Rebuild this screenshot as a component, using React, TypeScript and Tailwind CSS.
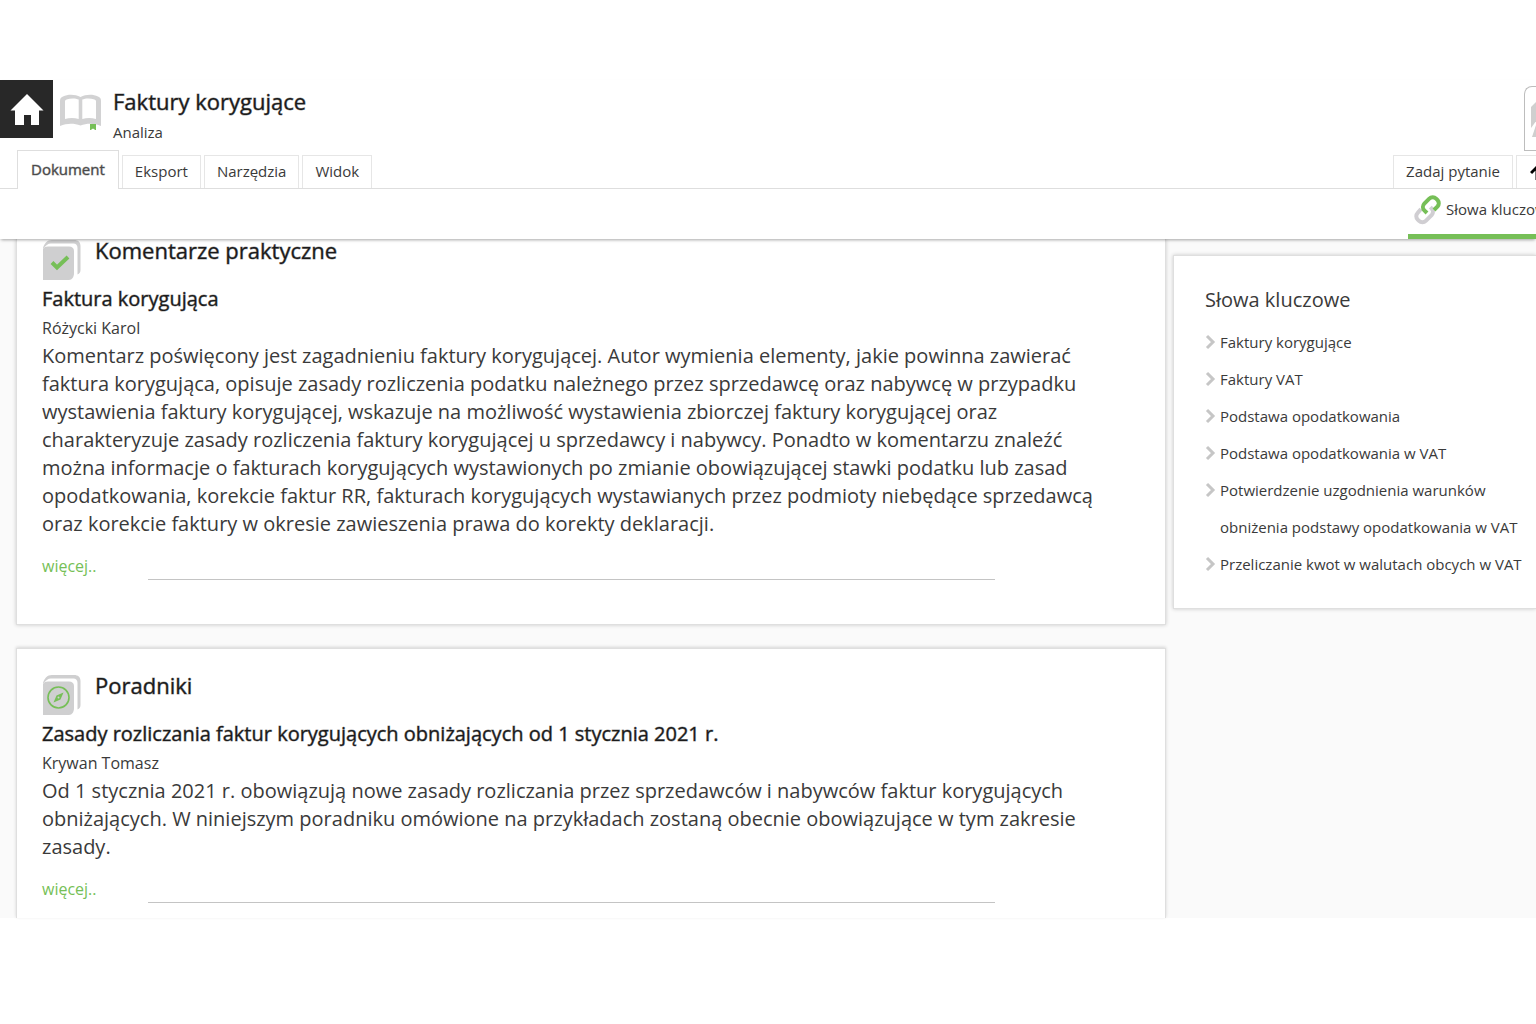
import type { ReactNode } from 'react'

interface Entry {
  title: string
  author: string
  text: string
}

const tabs = ['Eksport', 'Narzędzia', 'Widok']

const keywords = [
  'Faktury korygujące',
  'Faktury VAT',
  'Podstawa opodatkowania',
  'Podstawa opodatkowania w VAT',
  'Potwierdzenie uzgodnienia warunków obniżenia podstawy opodatkowania w VAT',
  'Przeliczanie kwot w walutach obcych w VAT',
]

const comment: Entry = {
  title: 'Faktura korygująca',
  author: 'Różycki Karol',
  text: 'Komentarz poświęcony jest zagadnieniu faktury korygującej. Autor wymienia elementy, jakie powinna zawierać faktura korygująca, opisuje zasady rozliczenia podatku należnego przez sprzedawcę oraz nabywcę w przypadku wystawienia faktury korygującej, wskazuje na możliwość wystawienia zbiorczej faktury korygującej oraz charakteryzuje zasady rozliczenia faktury korygującej u sprzedawcy i nabywcy. Ponadto w komentarzu znaleźć można informacje o fakturach korygujących wystawionych po zmianie obowiązującej stawki podatku lub zasad opodatkowania, korekcie faktur RR, fakturach korygujących wystawianych przez podmioty niebędące sprzedawcą oraz korekcie faktury w okresie zawieszenia prawa do korekty deklaracji.',
}

const guide: Entry = {
  title: 'Zasady rozliczania faktur korygujących obniżających od 1 stycznia 2021 r.',
  author: 'Krywan Tomasz',
  text: 'Od 1 stycznia 2021 r. obowiązują nowe zasady rozliczania przez sprzedawców i nabywców faktur korygujących obniżających. W niniejszym poradniku omówione na przykładach zostaną obecnie obowiązujące w tym zakresie zasady.',
}

function HomeIcon() {
  return (
    <svg className="w-[34px] h-8" viewBox="0 -1 34 32" fill="#fff" aria-hidden="true">
      <path d="M17 0 33.500 16.500H29V31h-8V21h-7v10H5V16.500H.5Z" />
    </svg>
  )
}

function OpenBookIcon() {
  return (
    <svg className="w-[42px] h-9" viewBox="0 0 42 36" fill="none" aria-hidden="true">
      <path
        d="M0 7C0 4 1 3.500 3 2.500 8 .2 15 .2 20.500 3 26 .2 33 .2 38 2.500c2 1 3 1.500 3 4.500v25c-7-3-14-3-20.500-.5C14 29 7 29 0 32Z"
        fill="#d2d2d3"
      />
      <path d="M5 7.500c0-1 .5-1.500 1.500-2 4-1.500 9-1.500 12.200 0v19.500c-4.400-1.200-9.200-1.200-13.700 0Z" fill="#fff" />
      <path d="M36 7.500c0-1-.5-1.500-1.500-2-4-1.500-9-1.500-12.200 0v19.500c4.400-1.200 9.200-1.200 13.700 0Z" fill="#fff" />
      <path d="M30 30h6v6.500l-3-2-3 2Z" fill="#76bf57" />
    </svg>
  )
}

function LinkIcon() {
  return (
    <svg className="w-7 h-8" viewBox="0 0 28 32" fill="none" strokeWidth="4" aria-hidden="true">
      <path d="m7 15-3.300 3.800a4.800 4.800 0 0 0 0 6.800l1.300 1.300a4.800 4.800 0 0 0 6.800 0l6-6a4.800 4.800 0 0 0 0-6.300l-1.500-1.500" stroke="#d0ced2" />
      <path d="m13 19-2.700-2.700a4.800 4.800 0 0 1 0-6.700l5-5a4.800 4.800 0 0 1 6.800 0l1.500 1.500a4.800 4.800 0 0 1 0 6.300L20 16" stroke="#76bf57" />
    </svg>
  )
}

function BookStack({ children }: { children: ReactNode }) {
  return (
    <svg className="w-10 h-[42px] shrink-0" viewBox="-1 -1 40 42" fill="none" aria-hidden="true">
      <path d="M0 8C1.500 3.500 4 0 9 0h22c4 0 6.500 2 6.500 6v24c0 2-1 3.500-3 4.500V8c0-3-1.500-4.500-4-4.500H8C5 3.500 2.500 5.500 0 9Z" fill="#cfcfd0" />
      <path d="M0 9c1-1.700 2.500-2.500 5-2.500h21c3 0 5 1.500 5 4.500v22c0 4-2 7-5 7H0Z" fill="#cfcfd0" />
      {children}
    </svg>
  )
}

function CommentIcon() {
  return (
    <BookStack>
      <path d="m9 22.500 5 5 11-10.500" stroke="#76bf57" strokeWidth="4" />
    </BookStack>
  )
}

function GuideIcon() {
  return (
    <BookStack>
      <circle cx="15.500" cy="22.500" r="10.500" stroke="#76bf57" strokeWidth="1.600" />
      <path d="m20.500 17.500-3 7-7 3 3-7Z" fill="#76bf57" />
      <circle cx="15.500" cy="22.500" r="1" fill="#cfcfd0" />
    </BookStack>
  )
}

function ChevronIcon() {
  return (
    <svg className="w-[15px] h-[37px] shrink-0" viewBox="0 0 15 37" fill="none" stroke="#c6c6c6" strokeWidth="3" aria-hidden="true">
      <path d="m2 12 6 6-6 6" />
    </svg>
  )
}

function Section({ heading, icon, entry }: { heading: string; icon: ReactNode; entry: Entry }) {
  return (
    <>
      <div className="flex gap-[13px] h-[45px]">
        {icon}
        <h2 className="text-[22px] leading-[22px] text-[#1b1b1b] [-webkit-text-stroke:1px_#1b1b1b70]">{heading}</h2>
      </div>
      <h3 className="text-[20px] leading-[30px] text-[#1b1b1b] [-webkit-text-stroke:1px_#1b1b1b70]">{entry.title}</h3>
      <p className="text-[16px] leading-7">{entry.author}</p>
      <p className="text-[20px] leading-7">{entry.text}</p>
      <div className="flex items-end mt-4">
        <a href="#" className="w-[106px] pb-[2px] text-[16px] leading-6 text-[#76bf57]">
          więcej..
        </a>
        <hr className="w-[79%] border-[#c4c4c4]" />
      </div>
    </>
  )
}

export default function App() {
  return (
    <div className="min-h-screen overflow-x-hidden bg-white py-20 font-['Open_Sans',sans-serif] font-normal text-[#3a3a3a]">
      <header className="relative z-10 bg-white shadow-[0_2px_3px_-1px_rgba(0,0,0,0.35)]">
        <div className="flex h-[70px]">
          <a href="#" aria-label="Strona główna" className="flex w-[53px] h-[58px] items-center justify-center bg-[#282828]">
            <HomeIcon />
          </a>
          <div className="ml-[7px] mt-[14px]">
            <OpenBookIcon />
          </div>
          <div className="ml-[11px] mt-[7px] flex-1">
            <h1 className="text-[22px] leading-7 text-[#1b1b1b] [-webkit-text-stroke:1px_#1b1b1b70]">Faktury korygujące</h1>
            <p className="text-[15px] leading-[34px]">Analiza</p>
          </div>
          <button
            type="button"
            aria-label="Logo"
            className="mt-[6px] h-[65px] w-3 overflow-hidden rounded-tl-lg border border-r-0 border-[#bdbdbd] bg-white"
          >
            <svg className="ml-[6px] h-9 w-[6px]" viewBox="0 0 6 36" fill="#cfcfcf" aria-hidden="true">
              <path d="M6 0v19L0 27V6Z" />
              <path d="M6 21v15H1Z" />
            </svg>
          </button>
        </div>
        <nav className="flex items-end text-[15px]">
          <div className="w-[17px] self-stretch border-b border-[#dedede]" />
          <button
            type="button"
            className="h-[39px] border border-b-0 border-[#dedede] px-[13px] pb-[2px] text-[#4a4a4a] [-webkit-text-stroke:1px_#4a4a4a70]"
          >
            Dokument
          </button>
          <div className="flex h-[34px] flex-1 gap-[3px] border-b border-[#dedede] pl-[3px]">
            {tabs.map((tab) => (
              <button key={tab} type="button" className="border border-b-0 border-[#e6e6e6] px-3 pb-[2px]">
                {tab}
              </button>
            ))}
            <div className="flex-1" />
            <button type="button" className="border border-b-0 border-[#e6e6e6] px-3 pb-[2px]">
              Zadaj pytanie
            </button>
            <button type="button" aria-label="Do góry" className="w-5 overflow-hidden border border-r-0 border-b-0 border-[#e6e6e6] pl-[13px]">
              <svg className="h-4 w-4" viewBox="0 0 16 16" fill="none" stroke="#000" strokeWidth="3" aria-hidden="true">
                <path d="m1 9 6-6 6 6M7 4v12" />
              </svg>
            </button>
          </div>
        </nav>
        <div className="flex h-[50px] justify-end overflow-hidden">
          <button type="button" className="flex w-32 gap-1 border-b-5 border-[#76bf57] pt-[5px] pl-[6px] text-left text-[15px]">
            <span className="shrink-0">
              <LinkIcon />
            </span>
            <span className="whitespace-nowrap leading-[30px]">Słowa kluczowe</span>
          </button>
        </div>
      </header>

      <div className="flex items-start gap-[7px] bg-[#fafafa] pl-4">
        <main className="min-w-0 flex-1">
          <section className="border border-t-0 border-[#dfdfdf] bg-white pr-[51px] pb-[44px] pl-[25px] shadow-[0_0_4px_rgba(0,0,0,0.2)]">
            <Section heading="Komentarze praktyczne" icon={<CommentIcon />} entry={comment} />
          </section>
          <section className="mt-[23px] border border-b-0 border-[#dfdfdf] bg-white pt-[25px] pr-[51px] pb-[15px] pl-[25px] shadow-[0_-1px_3px_rgba(0,0,0,0.15)]">
            <Section heading="Poradniki" icon={<GuideIcon />} entry={guide} />
          </section>
        </main>
        <aside className="mt-4 w-[363px] shrink-0 border border-r-0 border-[#dfdfdf] bg-white pt-7 pb-[25px] pl-[31px] shadow-[0_0_4px_rgba(0,0,0,0.2)]">
          <h2 className="text-[20px] leading-8">Słowa kluczowe</h2>
          <ul className="mt-2 text-[15px] leading-[37px]">
            {keywords.map((keyword) => (
              <li key={keyword} className="flex">
                <ChevronIcon />
                <a href="#">{keyword}</a>
              </li>
            ))}
          </ul>
        </aside>
      </div>
    </div>
  )
}
